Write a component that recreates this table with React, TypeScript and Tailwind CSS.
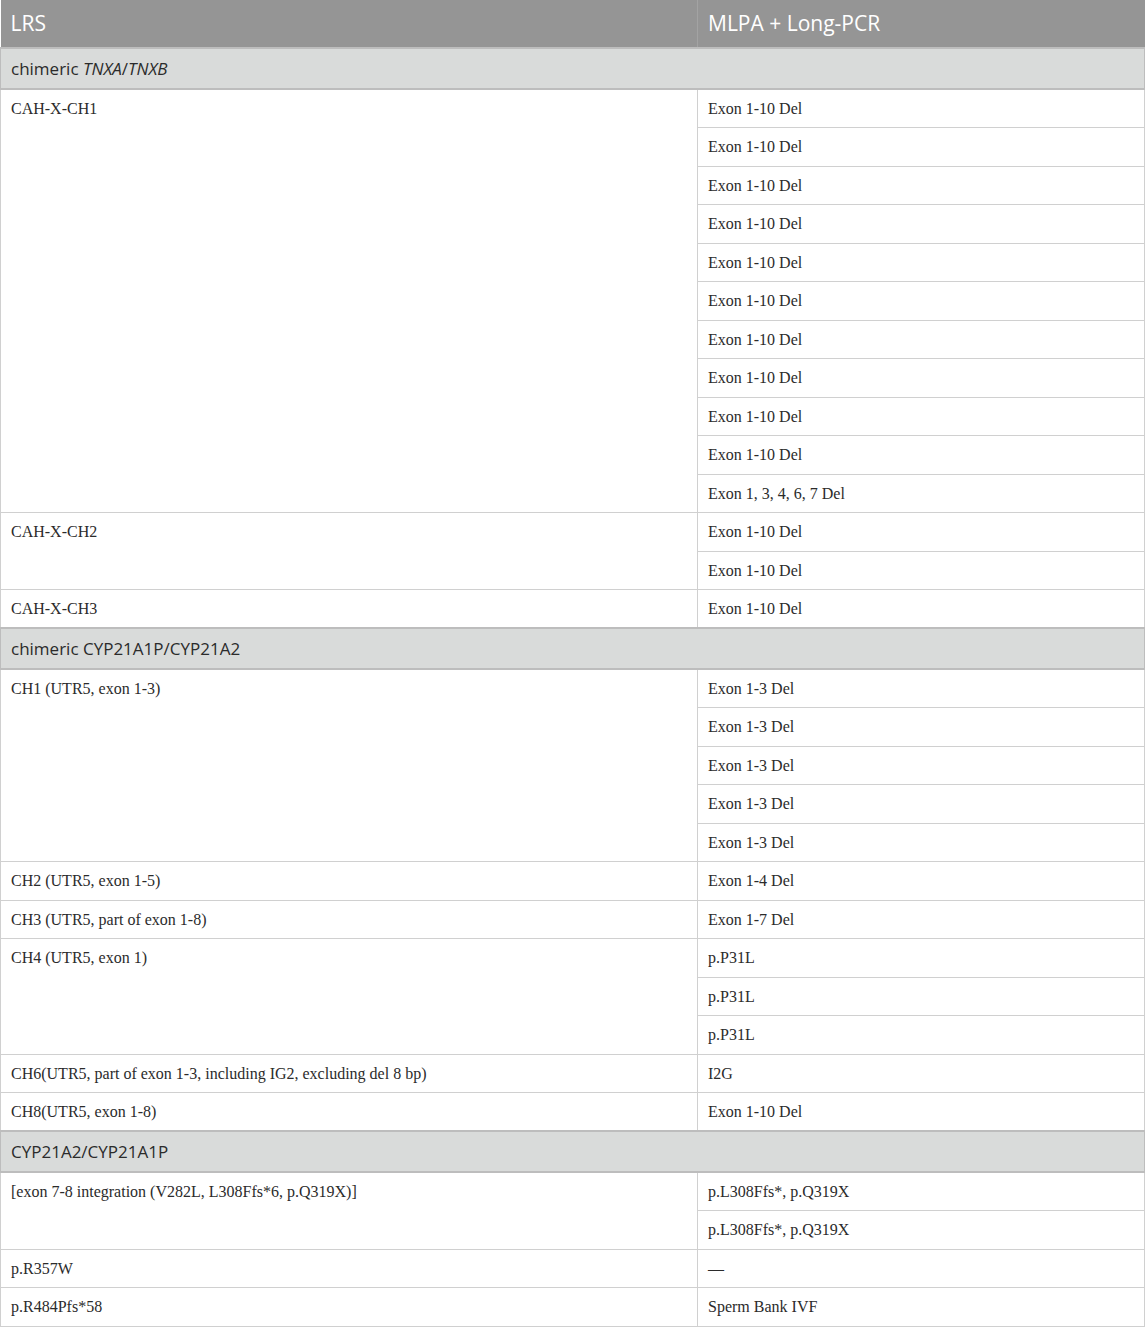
import React from "react";

type Group = { label: string; results: string[] };
type Section = { title: React.ReactNode; groups: Group[] };

const sections: Section[] = [
  {
    title: (
      <>
        chimeric <i>TNXA</i>/<i>TNXB</i>
      </>
    ),
    groups: [
      {
        label: "CAH-X-CH1",
        results: [
          ...Array(10).fill("Exon 1-10 Del"),
          "Exon 1, 3, 4, 6, 7 Del",
        ],
      },
      { label: "CAH-X-CH2", results: ["Exon 1-10 Del", "Exon 1-10 Del"] },
      { label: "CAH-X-CH3", results: ["Exon 1-10 Del"] },
    ],
  },
  {
    title: "chimeric CYP21A1P/CYP21A2",
    groups: [
      { label: "CH1 (UTR5, exon 1-3)", results: Array(5).fill("Exon 1-3 Del") },
      { label: "CH2 (UTR5, exon 1-5)", results: ["Exon 1-4 Del"] },
      { label: "CH3 (UTR5, part of exon 1-8)", results: ["Exon 1-7 Del"] },
      { label: "CH4 (UTR5, exon 1)", results: ["p.P31L", "p.P31L", "p.P31L"] },
      {
        label: "CH6(UTR5, part of exon 1-3, including IG2, excluding del 8 bp)",
        results: ["I2G"],
      },
      { label: "CH8(UTR5, exon 1-8)", results: ["Exon 1-10 Del"] },
    ],
  },
  {
    title: "CYP21A2/CYP21A1P",
    groups: [
      {
        label: "[exon 7-8 integration (V282L, L308Ffs*6, p.Q319X)]",
        results: ["p.L308Ffs*, p.Q319X", "p.L308Ffs*, p.Q319X"],
      },
      { label: "p.R357W", results: ["—"] },
      { label: "p.R484Pfs*58", results: ["Sperm Bank IVF"] },
    ],
  },
];

const cell =
  "border border-[#d0d0d0] px-[10px] align-top text-[16px] leading-[20px] text-[#2b2b2b] pt-[9px]";

export default function App() {
  return (
    <div className="w-[1145px] bg-white">
      <table
        className="w-full border-collapse table-fixed"
        style={{ fontFamily: '"Liberation Serif", serif' }}
      >
        <colgroup>
          <col className="w-[697px]" />
          <col />
        </colgroup>
        <thead>
          <tr className="bg-[#959595] h-[48px] text-white text-[21px] font-['Open_Sans',sans-serif]">
            <th className="text-left font-normal px-[10px] border-r border-[#a3a3a3]">LRS</th>
            <th className="text-left font-normal px-[10px]">MLPA + Long-PCR</th>
          </tr>
        </thead>
        <tbody>
          {sections.map((s, si) => (
            <React.Fragment key={si}>
              <tr className="h-[41px] bg-[#d9dbda]">
                <td
                  colSpan={2}
                  className="border-y-2 border-x border-[#bdbdbd] px-[10px] text-[17px] text-[#2b2b2b] font-['Open_Sans',sans-serif]"
                >
                  {s.title}
                </td>
              </tr>
              {s.groups.map((g, gi) =>
                g.results.map((r, ri) => (
                  <tr key={`${gi}-${ri}`} className="h-[38.5px]">
                    {ri === 0 && (
                      <td rowSpan={g.results.length} className={cell}>
                        {g.label}
                      </td>
                    )}
                    <td className={cell}>{r}</td>
                  </tr>
                ))
              )}
            </React.Fragment>
          ))}
        </tbody>
      </table>
    </div>
  );
}
